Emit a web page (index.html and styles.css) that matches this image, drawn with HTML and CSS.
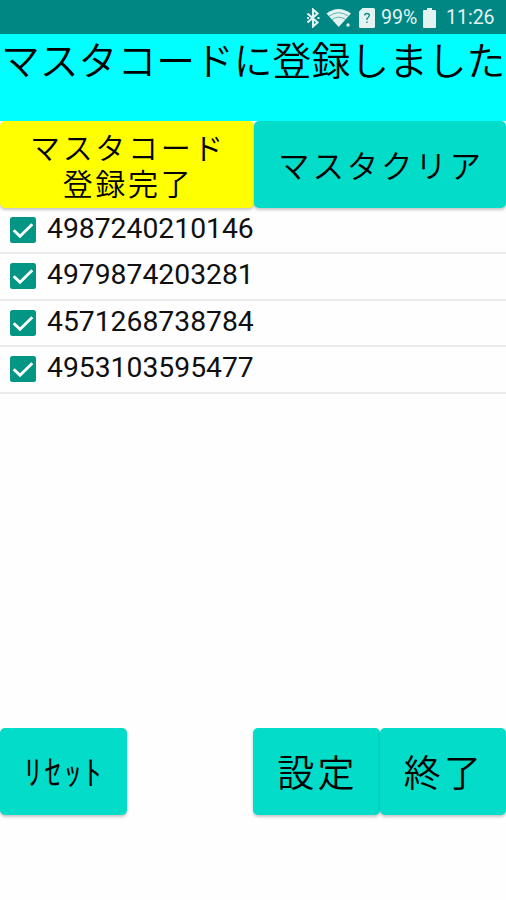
FILE: index.html
```html
<!DOCTYPE html>
<html lang="ja">
<head>
    <meta charset="UTF-8">
    <meta name="viewport" content="width=device-width, initial-scale=1.0">
    <title>マスタコード登録</title>
    <link rel="stylesheet" href="styles.css">
</head>
<body>
    <header class="status-bar">
        <svg class="icon-bluetooth" width="14" height="20" viewBox="0 0 14 20">
            <path d="M1.5 5.5L11.5 14.5L7 18.5V1.5L11.5 5.5L1.5 14.5" fill="none" stroke="currentColor" stroke-width="2.1"/>
            <path d="M1 9h2v2h-2zM11.5 9h2v2h-2z" fill="currentColor"/>
        </svg>
        <svg class="icon-wifi" width="26" height="20" viewBox="0 0 26 20">
            <path d="M0.5 5.5Q12.5 -3.5 25 5.5L12.7 19z" fill="currentColor"/>
            <path d="M3 8.2Q12.7 1.2 22.4 8.2M6 11.5Q12.7 6.8 19.5 11.5" fill="none" stroke="#008683" stroke-width="0.6"/>
            <circle cx="22" cy="17" r="1.7" fill="currentColor"/>
        </svg>
        <svg class="icon-sim" width="16" height="20" viewBox="0 0 16 20">
            <path d="M3.5 0H14.5Q16 0 16 1.5V18.5Q16 20 14.5 20H1.5Q0 20 0 18.5V3.5z" fill="currentColor"/>
            <path d="M5.7 7.5Q5.7 5.5 8 5.5T10.3 7.5Q10.3 9 8 10.5V12M8 13.5V15" fill="none" stroke="#008683" stroke-width="1.3"/>
        </svg>
        <span class="battery-level">99%</span>
        <svg class="icon-battery" width="13" height="20" viewBox="0 0 13 20">
            <path d="M4 0h5v2h3q1 0 1 1V19q0 1-1 1H1q-1 0-1-1V3q0-1 1-1h3z" fill="currentColor"/>
        </svg>
        <span class="clock">11:26</span>
    </header>

    <div class="message">マスタコードに登録しました</div>

    <div class="button-row">
        <button type="button" class="btn btn-done">マスタコード<br>登録完了</button>
        <button type="button" class="btn btn-clear">マスタクリア</button>
    </div>

    <ul class="code-list">
        <li class="code-item">
            <svg class="check" viewBox="0 0 26 26"><rect width="26" height="26" rx="2.5"/><path d="M3.7 13.2L10 19.3L22.3 7.3"/></svg>
            <span>4987240210146</span>
        </li>
        <li class="code-item">
            <svg class="check" viewBox="0 0 26 26"><rect width="26" height="26" rx="2.5"/><path d="M3.7 13.2L10 19.3L22.3 7.3"/></svg>
            <span>4979874203281</span>
        </li>
        <li class="code-item">
            <svg class="check" viewBox="0 0 26 26"><rect width="26" height="26" rx="2.5"/><path d="M3.7 13.2L10 19.3L22.3 7.3"/></svg>
            <span>4571268738784</span>
        </li>
        <li class="code-item">
            <svg class="check" viewBox="0 0 26 26"><rect width="26" height="26" rx="2.5"/><path d="M3.7 13.2L10 19.3L22.3 7.3"/></svg>
            <span>4953103595477</span>
        </li>
    </ul>

    <footer class="button-row footer-row">
        <button type="button" class="btn btn-reset">ﾘｾｯﾄ</button>
        <button type="button" class="btn btn-setting">設定</button>
        <button type="button" class="btn btn-exit">終了</button>
    </footer>
</body>
</html>
```
FILE: styles.css
```css
* {
    box-sizing: border-box;
}
body {
    margin: 0;
    height: 900px;
    display: flex;
    flex-direction: column;
    overflow: hidden;
    background-color: #fefefe;
    color: #101010;
    font-family: Roboto, "Noto Sans CJK JP", sans-serif;
}

/* status bar */
.status-bar {
    height: 34px;
    flex: none;
    display: flex;
    align-items: center;
    padding: 1px 0 0 306px;
    background-color: #008683;
    color: #e4f3f2;
    font-size: 19.5px;
    white-space: nowrap;
}
.status-bar svg {
    flex: none;
}
.icon-wifi {
    margin-left: 6px;
}
.icon-sim {
    margin-left: 7px;
}
.battery-level {
    width: 42px;
    margin-left: 6px;
}
.clock {
    margin-left: 10px;
}

.message {
    height: 87px;
    flex: none;
    padding-left: 1px;
    background-color: #00ffff;
    color: #000;
    font-family: "Noto Sans CJK JP", sans-serif;
    font-size: 38.8px;
    font-weight: 350;
    line-height: 49px;
    white-space: nowrap;
}

/* buttons */
.button-row {
    display: flex;
    flex: none;
    height: 87px;
}
.btn {
    height: 87px;
    padding: 0 0 2px 2px;
    border: none;
    border-radius: 5px;
    background-color: #02dcc8;
    color: #000;
    font-family: "Noto Sans CJK JP", sans-serif;
    font-weight: 350;
    letter-spacing: 0.089em;
    white-space: nowrap;
    box-shadow: 0 2px 3px rgba(0, 0, 0, 0.22);
}
.btn-done {
    width: 254px;
    background-color: #ffff00;
    font-size: 30px;
    line-height: 36px;
}
.btn-clear {
    width: 252px;
    font-size: 31.5px;
}
.btn-reset {
    width: 127px;
    margin-right: 126px;
    font-size: 34px;
}
.btn-setting {
    width: 127px;
    font-size: 37px;
}
.btn-exit {
    width: 126px;
    font-size: 37px;
}

/* registered codes */
.code-list {
    flex: none;
    height: 520px;
    margin: 0;
    padding: 0;
    list-style: none;
}
.code-item {
    display: flex;
    height: 46.4px;
    padding: 0 0 0 10px;
    border-bottom: 2px solid #ebebeb;
    font-size: 28.3px;
    line-height: 41px;
}
.check {
    width: 26px;
    height: 26px;
    margin: 9px 11px 0 0;
}
.check rect {
    fill: #039684;
}
.check path {
    fill: none;
    stroke: #fff;
    stroke-width: 2.8;
}
```
